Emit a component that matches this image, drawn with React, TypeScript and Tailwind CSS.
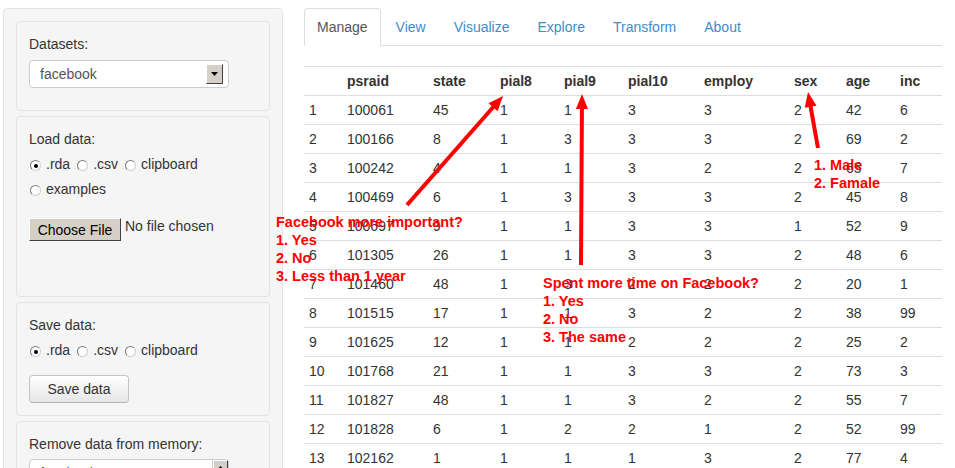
import React from "react";

const COLS = ["", "psraid", "state", "pial8", "pial9", "pial10", "employ", "sex", "age", "inc"];

const ROWS: string[][] = [
  ["1", "100061", "45", "1", "1", "3", "3", "2", "42", "6"],
  ["2", "100166", "8", "1", "3", "3", "3", "2", "69", "2"],
  ["3", "100242", "4", "1", "1", "3", "2", "2", "65", "7"],
  ["4", "100469", "6", "1", "3", "3", "3", "2", "45", "8"],
  ["5", "100697", "9", "1", "1", "3", "3", "1", "52", "9"],
  ["6", "101305", "26", "1", "1", "3", "3", "2", "48", "6"],
  ["7", "101460", "48", "1", "3", "2", "2", "2", "20", "1"],
  ["8", "101515", "17", "1", "1", "3", "2", "2", "38", "99"],
  ["9", "101625", "12", "1", "1", "2", "2", "2", "25", "2"],
  ["10", "101768", "21", "1", "1", "3", "3", "2", "73", "3"],
  ["11", "101827", "48", "1", "1", "3", "2", "2", "55", "7"],
  ["12", "101828", "6", "1", "2", "2", "1", "2", "52", "99"],
  ["13", "102162", "1", "1", "1", "1", "3", "2", "77", "4"],
];

const TABS = ["Manage", "View", "Visualize", "Explore", "Transform", "About"];

function Radio({ checked }: { checked?: boolean }) {
  return (
    <span className="relative inline-block w-[11px] h-[11px] rounded-full border border-[#7a7a7a] border-r-[#d4d0c8] border-b-[#d4d0c8] bg-white mt-[6px] mr-[5px] ml-[1px]">
      {checked && <span className="absolute left-[3px] top-[3px] w-[4px] h-[4px] rounded-full bg-black" />}
    </span>
  );
}

function RadioRow({ items, checked = 0 }: { items: string[]; checked?: number }) {
  return (
    <div className="flex items-start leading-[20px] h-[20px]">
      {items.map((it, i) => (
        <span key={it} className="flex items-start mr-[6px]">
          <Radio checked={i === checked} />
          <span>{it}</span>
        </span>
      ))}
    </div>
  );
}

function ClassicArrow({ up }: { up?: boolean }) {
  return (
    <span className="flex items-center justify-center w-[17px] h-[20px] bg-[#d4d0c8] border border-t-white border-l-white border-r-[#404040] border-b-[#404040]">
      <svg width="7" height="4" viewBox="0 0 7 4">
        <path d={up ? "M0 4 L3.5 0 L7 4 Z" : "M0 0 L7 0 L3.5 4 Z"} fill="#000" />
      </svg>
    </span>
  );
}

function arrow(x1: number, y1: number, x2: number, y2: number) {
  const dx = x2 - x1;
  const dy = y2 - y1;
  const len = Math.hypot(dx, dy);
  const ux = dx / len;
  const uy = dy / len;
  const hl = 15;
  const hw = 6;
  const bx = x2 - ux * hl;
  const by = y2 - uy * hl;
  const pts = `${x2},${y2} ${bx + uy * hw},${by - ux * hw} ${bx - uy * hw},${by + ux * hw}`;
  return (
    <g key={`${x1}-${y1}`}>
      <line x1={x1} y1={y1} x2={bx + ux * 2} y2={by + uy * 2} stroke="#ff0000" strokeWidth={4} />
      <polygon points={pts} fill="#ff0000" />
    </g>
  );
}

export default function App() {
  return (
    <div className="relative w-[955px] h-[468px] overflow-hidden bg-white text-[14px] leading-[20px] text-[#333]" style={{ fontFamily: '"Liberation Sans", Arial, sans-serif' }}>
      <div className="flex items-start">
        {/* sidebar */}
        <div className="shrink-0 ml-[3px] mt-[8px] w-[280px] bg-[#f5f5f5] border border-[#e3e3e3] rounded-[4px] p-[12px] flex flex-col gap-[5px]">
          <div className="shrink-0 h-[90px] border border-[#e3e3e3] rounded-[4px] px-[12px] pt-[12px]">
            <div>Datasets:</div>
            <div className="mt-[6px] w-[200px] h-[28px] bg-white border border-[#ccc] rounded-[4px] flex items-center justify-between pl-[10px] pr-[5px]">
              <span className="text-[#555]">facebook</span>
              <ClassicArrow />
            </div>
          </div>

          <div className="shrink-0 h-[181px] border border-[#e3e3e3] rounded-[4px] px-[12px] pt-[12px]">
            <div>Load data:</div>
            <div className="mt-[5px]">
              <RadioRow items={[".rda", ".csv", "clipboard"]} />
            </div>
            <div className="mt-[5px]">
              <RadioRow items={["examples"]} checked={-1} />
            </div>
            <div className="mt-[19px] flex items-start">
              <span className="w-[92px] h-[23px] bg-[#d4d0c8] border border-t-white border-l-white border-r-[#404040] border-b-[#404040] flex items-center justify-center text-[#000] leading-[20px]">
                Choose File
              </span>
              <span className="ml-[4px] -mt-[2px]">No file chosen</span>
            </div>
          </div>

          <div className="shrink-0 h-[114px] border border-[#e3e3e3] rounded-[4px] px-[12px] pt-[12px]">
            <div>Save data:</div>
            <div className="mt-[5px]">
              <RadioRow items={[".rda", ".csv", "clipboard"]} />
            </div>
            <button className="mt-[15px] w-[100px] h-[28px] rounded-[4px] border border-[#c5c5c5] border-b-[#b3b3b3] bg-gradient-to-b from-white to-[#e6e6e6] text-[#333] leading-[20px]">
              Save data
            </button>
          </div>

          <div className="shrink-0 h-[200px] border border-[#e3e3e3] rounded-[4px] px-[12px] pt-[12px]">
            <div>Remove data from memory:</div>
            <div className="mt-[5px] w-[200px] h-[80px] bg-white border border-[#ccc] rounded-[4px] flex justify-between pl-[10px]">
              <span className="text-[#555] pt-[3px]">facebook</span>
              <span className="w-[16px] h-full bg-[#eeeae2] border-l border-[#d4d0c8]">
                <span className="flex items-center justify-center w-[15px] h-[16px] bg-[#d4d0c8] border border-t-white border-l-white border-r-[#404040] border-b-[#404040]">
                  <svg width="7" height="4" viewBox="0 0 7 4">
                    <path d="M0 4 L3.5 0 L7 4 Z" fill="#000" />
                  </svg>
                </span>
              </span>
            </div>
          </div>
        </div>

        {/* main */}
        <div className="ml-[21px] mt-[8px] w-[638px]">
          <ul className="flex border-b border-[#ddd]">
            {TABS.map((t, i) => (
              <li
                key={t}
                className={
                  i === 0
                    ? "-mb-px mr-[2px] px-[12px] py-[8px] border border-[#ddd] border-b-transparent rounded-t-[4px] bg-white text-[#555]"
                    : "-mb-px mr-[2px] px-[12px] py-[8px] border border-transparent text-[#428bca]"
                }
              >
                {t}
              </li>
            ))}
          </ul>

          <table className="mt-[20px] w-[638px] table-fixed border-collapse">
            <colgroup>
              <col className="w-[38px]" />
              <col className="w-[86px]" />
              <col className="w-[67px]" />
              <col className="w-[64px]" />
              <col className="w-[64px]" />
              <col className="w-[76px]" />
              <col className="w-[90px]" />
              <col className="w-[52px]" />
              <col className="w-[54px]" />
              <col className="w-[47px]" />
            </colgroup>
            <thead>
              <tr>
                {COLS.map((c, i) => (
                  <th key={i} className="text-left font-bold px-[5px] py-[4px] leading-[20px] border-t border-[#ddd]">
                    {c}
                  </th>
                ))}
              </tr>
            </thead>
            <tbody>
              {ROWS.map((r) => (
                <tr key={r[0]}>
                  {r.map((v, j) => (
                    <td key={j} className="px-[5px] py-[4px] leading-[20px] border-t border-[#ddd]">
                      {v}
                    </td>
                  ))}
                </tr>
              ))}
            </tbody>
          </table>
        </div>
      </div>

      {/* annotations */}
      <svg className="absolute left-0 top-0 pointer-events-none" width="955" height="468">
        {arrow(407, 205, 503, 96)}
        {arrow(581, 265, 582, 94)}
        {arrow(818, 148, 808, 92)}
      </svg>
      <div className="absolute left-[276px] top-[213px] text-[14.5px] leading-[18px] font-bold text-[#ff0000]">
        <div>Facebook more important?</div>
        <div>1. Yes</div>
        <div>2. No</div>
        <div>3. Less than 1 year</div>
      </div>
      <div className="absolute left-[543px] top-[274px] text-[14.5px] leading-[18px] font-bold text-[#ff0000]">
        <div>Spent more time on Facebook?</div>
        <div>1. Yes</div>
        <div>2. No</div>
        <div>3. The same</div>
      </div>
      <div className="absolute left-[814px] top-[156px] text-[14.5px] leading-[18px] font-bold text-[#ff0000]">
        <div>1. Male</div>
        <div>2. Famale</div>
      </div>
    </div>
  );
}
